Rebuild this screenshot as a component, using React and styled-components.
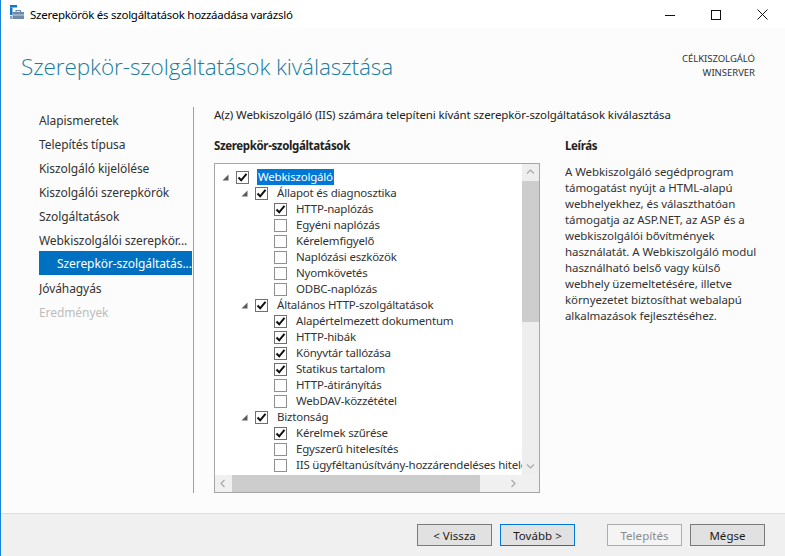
import React from "react";
import styled, { createGlobalStyle } from "styled-components";

const Global = createGlobalStyle`
  html, body { margin: 0; padding: 0; height: 100%; background: #fcfcfc; }
  #root { height: 100%; }
  * { box-sizing: border-box; }
`;

const FONT = `"Noto Sans", "Open Sans", sans-serif`;

const Window = styled.div`
  width: 785px; height: 556px; display: flex; flex-direction: column;
  border-left: 1px solid #1883d7; background: #fcfcfc; overflow: hidden;
  font-family: ${FONT}; font-size: 11.5px; color: #1f1f1f;
`;
const TitleBar = styled.div`
  height: 28px; flex: none; display: flex; align-items: center; background: #fff;
  padding-left: 9px; position: relative;
`;
const IconSvg = styled.svg`
  width: 16px; height: 16px; flex: none; margin-bottom: 2px;
`;
const TitleText = styled.span`
  margin-left: 4px; font-size: 11.5px; color: #000; letter-spacing: -0.26px; white-space: nowrap;
`;
const WinButtons = styled.div`
  margin-left: auto; display: flex; align-items: center; height: 100%;
`;
const WinBtn = styled.div`
  width: 46px; height: 100%; display: flex; align-items: center; justify-content: center;
`;
const Header = styled.div`
  height: 66px; flex: none; display: flex; justify-content: space-between; padding: 0 30px 0 20px;
`;
const Heading = styled.h1`
  margin: 21px 0 0; font-family: "Open Sans", sans-serif; font-weight: 300; font-size: 22.5px;
  line-height: 36px; color: #1a7ca0; letter-spacing: -0.07px; white-space: nowrap;
`;
const Target = styled.div`
  margin-top: 24px; text-align: right; font-size: 9.5px; line-height: 14px; color: #333; letter-spacing: -0.02px;
`;
const Body = styled.div`
  flex: 1; min-height: 0; display: flex; padding: 13px 0 20px 38px;
`;
const Nav = styled.nav`
  width: 155px; flex: none; border-right: 1px solid #a0a0a0; padding-right: 1px;
`;
const NavItem = styled.div`
  height: 24px; display: flex; align-items: center; white-space: nowrap; overflow: hidden;
  padding-left: ${p => (p.$sub ? 18 : 0)}px;
  padding-top: ${p => (p.$sub ? 0 : 2)}px;
  letter-spacing: -0.08px;
  font-size: 12px;
  background: ${p => (p.$active ? "#0070c0" : "transparent")};
  color: ${p => (p.$active ? "#fff" : p.$disabled ? "#bdbdbd" : "#333")};
`;
const Content = styled.div`
  flex: 1; min-width: 0; padding-left: 20px; display: flex; flex-direction: column;
`;
const Intro = styled.div`
  height: 16px; line-height: 16px; letter-spacing: -0.11px; white-space: nowrap; color: #222;
`;
const Columns = styled.div`
  flex: 1; min-height: 0; display: flex; margin-top: 15px;
`;
const TreeCol = styled.div`
  width: 326px; flex: none; display: flex; flex-direction: column;
`;
const ColTitle = styled.div`
  height: 16px; line-height: 16px; font-weight: 700; letter-spacing: -0.36px; font-size: 11.5px; color: #222; white-space: nowrap;
`;
const TreeBox = styled.div`
  margin-top: 9px; flex: 1; min-height: 0; border: 1px solid #a6a6a6; background: #fff;
  display: grid; grid-template-columns: 1fr 17px; grid-template-rows: 1fr 17px;
`;
const TreeRows = styled.div`
  overflow: hidden; padding-top: 5px; min-width: 0; background: #fff;
`;
const Row = styled.div`
  height: 16px; display: flex; align-items: center; white-space: nowrap;
  padding-left: ${p => 7 + p.$level * 19}px;
`;
const Expander = styled.span`
  width: 11px; flex: none; display: flex; align-items: center;
`;
const Gap = styled.span`
  width: 11px; flex: none;
`;
const Box = styled.span`
  width: 13px; height: 13px; flex: none; margin-left: 3px; background: #fff;
  border: 1px solid ${p => (p.$on ? "#707070" : "#8f8f8f")};
  display: flex; align-items: center; justify-content: center;
`;
const Label = styled.span`
  margin-left: 8px; padding: 0 1px; height: 16px; line-height: 16px; letter-spacing: -0.2px; color: #333;
  ${p => p.$sel && "background:#0078d7;color:#fff;"}
`;
const VBar = styled.div`
  background: #eeeeee; display: flex; flex-direction: column;
`;
const HBar = styled.div`
  background: #f0f0f0; display: flex; align-items: stretch;
`;
const Corner = styled.div`background: #f0f0f0;`;
const Arrow = styled.div`
  flex: none; width: 17px; height: 17px; display: flex; align-items: center; justify-content: center;
`;
const VThumb = styled.div`height: 141px; flex: none; background: #cdcdcd;`;
const VRest = styled.div`flex: 1;`;
const HThumb = styled.div`width: 248px; flex: none; background: #cdcdcd;`;
const HRest = styled.div`flex: 1;`;
const DescCol = styled.div`
  margin-left: 25px; width: 205px; flex: none;
`;
const Desc = styled.p`
  margin: 10px 0 0; line-height: 16px; letter-spacing: -0.08px; color: #333; white-space: pre-line;
`;
const Footer = styled.div`
  height: 43px; flex: none; background: #f0f0f0; border-top: 1px solid #dfdfdf;
  display: flex; align-items: flex-start; padding: 10px 20px 0 0; justify-content: flex-end;
`;
const Button = styled.div`
  width: 75px; height: 22px; margin-left: ${p => p.$gap}px; display: flex; align-items: center; justify-content: center;
  font-size: 11.5px; letter-spacing: 0.05px;
  background: ${p => (p.$disabled ? "#f4f4f4" : "#e1e1e1")};
  border: 1px solid ${p => (p.$focus ? "#0078d7" : p.$disabled ? "#adadad" : "#7a7a7a")};
  color: ${p => (p.$disabled ? "#8a8a8a" : "#1a1a1a")};
`;

const Check = () => (
  <svg width="11" height="11" viewBox="0 0 11 11"><path d="M1.5 5.5 L4.2 8.3 L9.5 1.8" fill="none" stroke="#111" strokeWidth="2" /></svg>
);
const Tri = () => (
  <svg width="7" height="7" viewBox="0 0 7 7"><path d="M6.5 0.5 V6.5 H0.5 Z" fill="#5c5c5c" /></svg>
);
const Chev = ({ d }) => {
  const paths = {
    up: "M1 5.5 L4.5 2 L8 5.5", down: "M1 2.5 L4.5 6 L8 2.5",
    left: "M5.5 1 L2 4.5 L5.5 8", right: "M2.5 1 L6 4.5 L2.5 8",
  };
  return <svg width="9" height="9" viewBox="0 0 9 9"><path d={paths[d]} fill="none" stroke="#a8a8a8" strokeWidth="1.2" /></svg>;
};
const AppIcon = () => (
  <IconSvg viewBox="0 0 16 16">
    <rect x="0" y="0" width="7" height="2.5" fill="#0f78c9" />
    <rect x="0" y="2.5" width="2.5" height="7.5" fill="#0f78c9" />
    <rect x="0" y="11" width="2" height="3" fill="#7fa8cf" />
    <rect x="2.5" y="7" width="11.5" height="7" fill="#6d8ba6" />
    <rect x="6" y="5.5" width="4.5" height="1.8" fill="none" stroke="#6d8ba6" strokeWidth="1" />
    <rect x="2.5" y="9.5" width="11.5" height="1" fill="#c8d6e2" />
  </IconSvg>
);

const tree = [
  [0, true, "Webkiszolgáló", true, true],
  [1, true, "Állapot és diagnosztika", true],
  [2, true, "HTTP-naplózás"],
  [2, false, "Egyéni naplózás"],
  [2, false, "Kérelemfigyelő"],
  [2, false, "Naplózási eszközök"],
  [2, false, "Nyomkövetés"],
  [2, false, "ODBC-naplózás"],
  [1, true, "Általános HTTP-szolgáltatások", true],
  [2, true, "Alapértelmezett dokumentum"],
  [2, true, "HTTP-hibák"],
  [2, true, "Könyvtár tallózása"],
  [2, true, "Statikus tartalom"],
  [2, false, "HTTP-átirányítás"],
  [2, false, "WebDAV-közzététel"],
  [1, true, "Biztonság", true],
  [2, true, "Kérelmek szűrése"],
  [2, false, "Egyszerű hitelesítés"],
  [2, false, "IIS ügyféltanúsítvány-hozzárendeléses hitelesítés"],
];

const nav = [
  ["Alapismeretek"], ["Telepítés típusa"], ["Kiszolgáló kijelölése"], ["Kiszolgálói szerepkörök"],
  ["Szolgáltatások"], ["Webkiszolgálói szerepkör..."], ["Szerepkör-szolgáltatás...", "active"],
  ["Jóváhagyás"], ["Eredmények", "disabled"],
];

const desc = `A Webkiszolgáló segédprogram
támogatást nyújt a HTML-alapú
webhelyekhez, és választhatóan
támogatja az ASP.NET, az ASP és a
webkiszolgálói bővítmények
használatát. A Webkiszolgáló modul
használható belső vagy külső
webhely üzemeltetésére, illetve
környezetet biztosíthat webalapú
alkalmazások fejlesztéséhez.`;

export default function App() {
  return (
    <Window>
      <Global />
      <TitleBar>
        <AppIcon />
        <TitleText>Szerepkörök és szolgáltatások hozzáadása varázsló</TitleText>
        <WinButtons>
          <WinBtn>
            <svg width="11" height="11" viewBox="0 0 11 11"><path d="M0 6.5 H10" stroke="#111" strokeWidth="1" /></svg>
          </WinBtn>
          <WinBtn>
            <svg width="11" height="11" viewBox="0 0 11 11"><rect x="0.5" y="1.5" width="9" height="9" fill="none" stroke="#111" /></svg>
          </WinBtn>
          <WinBtn>
            <svg width="11" height="11" viewBox="0 0 11 11"><path d="M0.5 0.5 L10.5 10.5 M10.5 0.5 L0.5 10.5" stroke="#111" strokeWidth="1" /></svg>
          </WinBtn>
        </WinButtons>
      </TitleBar>
      <Header>
        <Heading>Szerepkör-szolgáltatások kiválasztása</Heading>
        <Target>CÉLKISZOLGÁLÓ<br />WINSERVER</Target>
      </Header>
      <Body>
        <Nav>
          {nav.map(([t, s]) => (
            <NavItem key={t} $active={s === "active"} $disabled={s === "disabled"} $sub={s === "active"}>{t}</NavItem>
          ))}
        </Nav>
        <Content>
          <Intro>A(z) Webkiszolgáló (IIS) számára telepíteni kívánt szerepkör-szolgáltatások kiválasztása</Intro>
          <Columns>
            <TreeCol>
              <ColTitle>Szerepkör-szolgáltatások</ColTitle>
              <TreeBox>
                <TreeRows>
                  {tree.map(([lvl, on, text, exp, sel]) => (
                    <Row key={text} $level={lvl}>
                      {exp ? <Expander><Tri /></Expander> : <Gap />}
                      <Box $on={on}>{on && <Check />}</Box>
                      <Label $sel={sel}>{text}</Label>
                    </Row>
                  ))}
                </TreeRows>
                <VBar>
                  <Arrow><Chev d="up" /></Arrow>
                  <VThumb />
                  <VRest />
                  <Arrow><Chev d="down" /></Arrow>
                </VBar>
                <HBar>
                  <Arrow><Chev d="left" /></Arrow>
                  <HThumb />
                  <HRest />
                  <Arrow><Chev d="right" /></Arrow>
                </HBar>
                <Corner />
              </TreeBox>
            </TreeCol>
            <DescCol>
              <ColTitle>Leírás</ColTitle>
              <Desc>{desc}</Desc>
            </DescCol>
          </Columns>
        </Content>
      </Body>
      <Footer>
        <Button>&lt; Vissza</Button>
        <Button $gap={8} $focus>Tovább &gt;</Button>
        <Button $gap={32} $disabled>Telepítés</Button>
        <Button $gap={8}>Mégse</Button>
      </Footer>
    </Window>
  );
}
